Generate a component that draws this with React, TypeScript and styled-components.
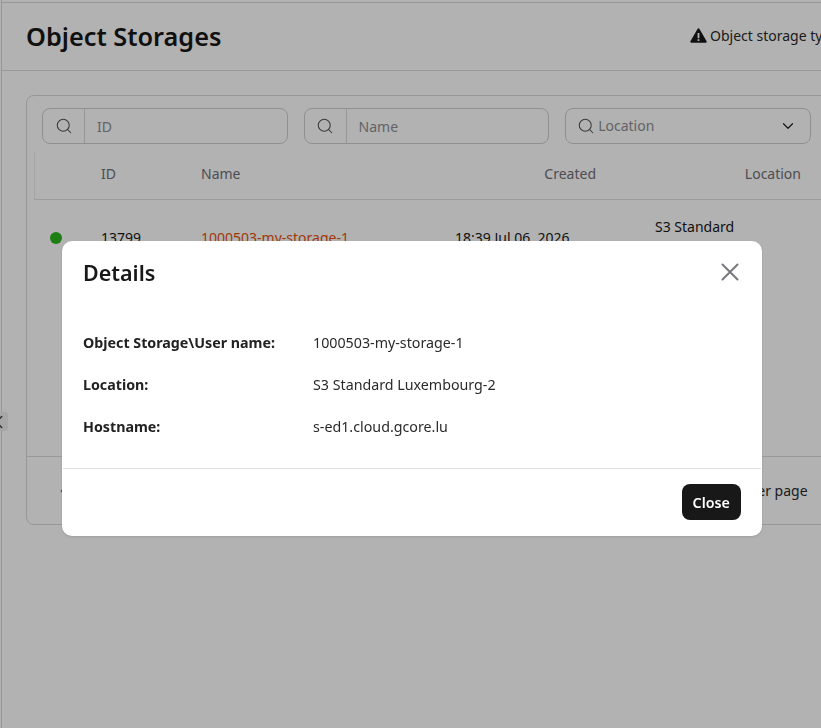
import React from "react";
import styled, { createGlobalStyle } from "styled-components";
import { Search, ChevronDown, ChevronLeft } from "lucide-react";

const Global = createGlobalStyle`
  html, body { margin: 0; padding: 0; background: #fff; }
  body { font-family: "Noto Sans", "Open Sans", sans-serif; color: #181818; overflow: hidden; }
  #root { height: 728px; overflow: hidden; }
`;

const Shell = styled.div`
  display: flex;
  height: 728px;
  width: 821px;
  overflow: hidden;
  box-sizing: border-box;
  padding-left: 1px;
`;
const Rail = styled.aside`
  flex: 0 0 1px;
  box-sizing: border-box;
  border-left: 1px solid #d9d9d9;
`;
const RailToggle = styled.span`
  position: absolute;
  left: 0;
  top: 412px;
  width: 8px;
  height: 19px;
  background: #efefef;
  border-radius: 0 3px 3px 0;
  display: flex;
  align-items: center;
  overflow: hidden;
  color: #444;
  z-index: 1;
  svg { margin-left: -12px; flex: none; }
`;
const Main = styled.main`
  flex: 0 0 1200px;
  padding-top: 2px;
`;
const Header = styled.header`
  height: 69px;
  border-top: 1px solid #d9d9d9;
  border-bottom: 1px solid #dcdcdc;
  display: flex;
  align-items: center;
  padding: 0 0 2px 24px;
  box-sizing: border-box;
`;
const Title = styled.h1`
  margin: 0;
  width: 664px;
  font-size: 25.3px;
  line-height: 32px;
  font-weight: 600;
  color: #181818;
`;
const Notice = styled.div`
  display: flex;
  align-items: center;
  gap: 3px;
  font-size: 14px;
  color: #2a2a2a;
  white-space: nowrap;
  svg { margin-top: -1px; }
`;
const Card = styled.section`
  margin: 24px 0 0 24px;
  width: 1100px;
  height: 430px;
  border: 1px solid #d9d9d9;
  border-radius: 8px;
  box-sizing: border-box;
  padding: 12px 0 0 7px;
  display: flex;
  flex-direction: column;
`;
const Filters = styled.div`
  display: flex;
  gap: 16px;
  padding-left: 8px;
`;
const InputGroup = styled.div`
  width: 245.6px;
  height: 36px;
  box-sizing: border-box;
  border: 1px solid #cfcfd3;
  border-radius: 8px;
  display: flex;
  align-items: center;
  font-size: 14px;
  color: #8e8e93;
`;
const Addon = styled.span`
  flex: 0 0 41px;
  height: 100%;
  border-right: 1px solid #d9d9dc;
  display: flex;
  align-items: center;
  justify-content: center;
  color: #55555b;
`;
const Placeholder = styled.span`
  padding-left: 12px;
  padding-top: 1px;
`;
const Select = styled(InputGroup)`
  padding: 0 13px 0 11px;
  gap: 3px;
`;
const SelectText = styled.span`
  flex: 1;
  margin-top: -1px;
`;
const HeadRow = styled.div`
  display: grid;
  grid-template-columns: 66px 100px 150px 245px 205px;
  height: 48px;
  align-items: center;
  margin-top: 8px;
  padding-bottom: 4px;
  border-left: 1px solid #ececec;
  border-bottom: 1px solid #e0e0e0;
  box-sizing: border-box;
  font-size: 14px;
  color: #6f6f76;
`;
const HeadCell = styled.span<{ $right?: boolean }>`
  text-align: ${(p) => (p.$right ? "right" : "left")};
`;
const BodyRow = styled.div`
  display: grid;
  grid-template-columns: 16px 35px 100px 254px 200px 100px;
  margin-top: 8px;
  height: 60px;
  align-items: center;
  font-size: 14px;
  color: #181818;
  padding-left: 16px;
  box-sizing: border-box;
  line-height: 20px;
`;
const Dot = styled.span`
  width: 12px;
  height: 12px;
  border-radius: 50%;
  background: #2ab51c;
`;
const NameLink = styled.span`
  color: #e8500f;
`;
const LocationCell = styled.span`
  margin-top: -2px;
`;
const Spacer = styled.div`
  flex: 1;
`;
const Footer = styled.div`
  height: 68px;
  margin-left: -7px;
  border-top: 1px solid #dcdcdc;
  display: flex;
  align-items: center;
  padding-left: 29px;
  font-size: 14px;
  color: #6f6f76;
  box-sizing: border-box;
`;
const PerPage = styled.span`
  margin-left: 619px;
  margin-top: -1px;
  color: #2a2a2a;
  white-space: nowrap;
`;
const Backdrop = styled.div`
  position: fixed;
  inset: 0;
  background: rgba(0, 0, 0, 0.3);
  z-index: 5;
`;
const Dialog = styled.div`
  position: fixed;
  left: 62px;
  top: 241px;
  width: 700px;
  height: 295px;
  background: #fff;
  border-radius: 10px;
  box-shadow: 0 1px 3px rgba(0, 0, 0, 0.12);
  display: flex;
  flex-direction: column;
  box-sizing: border-box;
  z-index: 6;
`;
const DialogHead = styled.div`
  display: flex;
  align-items: center;
  justify-content: space-between;
  padding: 16px 23px 0 21px;
  height: 48px;
  box-sizing: border-box;
`;
const DialogTitle = styled.h2`
  margin: 0;
  font-size: 21.5px;
  line-height: 32px;
  font-weight: 600;
  color: #181818;
`;
const CloseIcon = styled.svg`
  width: 18px;
  height: 18px;
  stroke: #7a7a82;
  stroke-width: 2.1;
  stroke-linecap: round;
  fill: none;
  margin-top: -2px;
`;
const DetailList = styled.div`
  display: flex;
  flex-direction: column;
  gap: 22px;
  padding: 44px 21px 0;
  flex: 1;
`;
const DetailRow = styled.div`
  display: grid;
  grid-template-columns: 230px 1fr;
  font-size: 14.25px;
  line-height: 20px;
  color: #2a2a2a;
`;
const DetailLabel = styled.span`
  font-weight: 700;
  color: #222;
`;
const DialogFoot = styled.div`
  height: 68px;
  border-top: 1px solid #e0e0e4;
  margin: 0 1px;
  display: flex;
  align-items: center;
  justify-content: flex-end;
  padding: 0 20px 1px 0;
  box-sizing: border-box;
`;
const CloseButton = styled.button`
  width: 59.5px;
  height: 36px;
  border: 0;
  border-radius: 8px;
  background: #181818;
  color: #fff;
  font-family: inherit;
  font-size: 14.25px;
  font-weight: 600;
  padding: 0;
`;

export default function App() {
  return (
    <>
      <Global />
      <Shell>
        <Rail>
          <RailToggle>
            <ChevronLeft size={22} strokeWidth={1.6} />
          </RailToggle>
        </Rail>
        <Main>
          <Header>
            <Title>Object Storages</Title>
            <Notice>
              <svg width="17" height="15" viewBox="0 0 17 15" aria-hidden="true">
                <path
                  fill="#181818"
                  fillRule="evenodd"
                  d="M8.5 0.3c.4 0 .8.2 1 .6l7.1 12.4c.4.7-.1 1.5-.9 1.5H1.3c-.8 0-1.3-.8-.9-1.5L7.5.9c.2-.4.6-.6 1-.6ZM7.6 5v5.2h1.8V5H7.6Zm0 6.3v1.8h1.8v-1.8H7.6Z"
                />
              </svg>
              <span>Object storage type availability depends on the location</span>
            </Notice>
          </Header>
          <Card>
            <Filters>
              <InputGroup>
                <Addon><Search size={18} strokeWidth={1.4} /></Addon>
                <Placeholder>ID</Placeholder>
              </InputGroup>
              <InputGroup>
                <Addon><Search size={18} strokeWidth={1.4} /></Addon>
                <Placeholder>Name</Placeholder>
              </InputGroup>
              <Select>
                <Search size={18} strokeWidth={1.4} color="#55555b" />
                <SelectText>Location</SelectText>
                <ChevronDown size={18} strokeWidth={1.6} color="#222" />
              </Select>
            </Filters>
            <HeadRow>
              <span />
              <HeadCell>ID</HeadCell>
              <HeadCell>Name</HeadCell>
              <HeadCell $right>Created</HeadCell>
              <HeadCell $right>Location</HeadCell>
            </HeadRow>
            <BodyRow>
              <Dot />
              <span />
              <span>13799</span>
              <NameLink>1000503-my-storage-1</NameLink>
              <span>18:39 Jul 06, 2026</span>
              <LocationCell>S3 Standard Luxembourg-2</LocationCell>
            </BodyRow>
            <Spacer />
            <Footer>
              <ChevronLeft size={14} />
              <PerPage>10 items per page</PerPage>
            </Footer>
          </Card>
        </Main>
      </Shell>
      <Backdrop />
      <Dialog role="dialog">
        <DialogHead>
          <DialogTitle>Details</DialogTitle>
          <CloseIcon viewBox="0 0 18 18" aria-label="Close">
            <path d="M1.5 1.5 16.5 16.5M16.5 1.5 1.5 16.5" />
          </CloseIcon>
        </DialogHead>
        <DetailList>
          <DetailRow><DetailLabel>Object Storage\User name:</DetailLabel><span>1000503-my-storage-1</span></DetailRow>
          <DetailRow><DetailLabel>Location:</DetailLabel><span>S3 Standard Luxembourg-2</span></DetailRow>
          <DetailRow><DetailLabel>Hostname:</DetailLabel><span>s-ed1.cloud.gcore.lu</span></DetailRow>
        </DetailList>
        <DialogFoot>
          <CloseButton>Close</CloseButton>
        </DialogFoot>
      </Dialog>
    </>
  );
}
